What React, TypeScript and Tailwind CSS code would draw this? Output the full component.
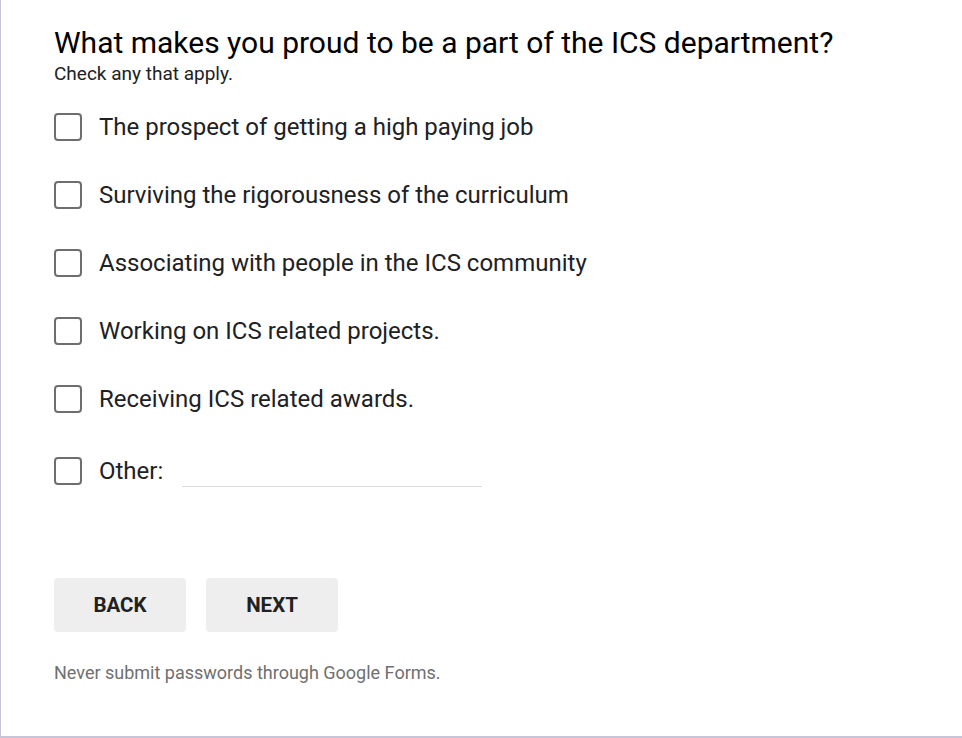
const options = [
    "The prospect of getting a high paying job",
    "Surviving the rigorousness of the curriculum",
    "Associating with people in the ICS community",
    "Working on ICS related projects.",
    "Receiving ICS related awards.",
]

const Checkbox = () => (
    <div className="w-[28px] h-[28px] shrink-0 rounded-[4px] border-2 border-[#6e6e6e] bg-white" />
)

const App = () => {
    return (
        <div className="w-[962px] h-[738px] bg-white font-['Roboto',sans-serif] text-[#202124] overflow-hidden">
            <div className="h-[738px] border-l border-b-2 border-[#c9c5d9] pl-[53px] pt-[26px]">
                <h2 className="text-[30px] leading-[34px] text-black">What makes you proud to be a part of the ICS department?</h2>
                <p className="text-[19px] leading-[22px] text-[#202124] mt-[3px]">Check any that apply.</p>

                <div className="flex flex-col mt-[8px]">
                    {options.map(option => (
                        <label key={option} className="flex items-center gap-[17px] h-[68px]">
                            <Checkbox />
                            <span className="text-[24px] leading-[28px] text-[#202124]">{option}</span>
                        </label>
                    ))}
                    <label className="flex items-center gap-[17px] h-[68px] mt-[4px]">
                        <Checkbox />
                        <span className="text-[24px] leading-[28px] text-[#202124]">Other:</span>
                        <div className="ml-[2px] w-[300px] h-[32px] border-b border-[#dcdcdc]" />
                    </label>
                </div>

                <div className="flex gap-[20px] mt-[73px]">
                    <button className="w-[132px] h-[54px] rounded-[4px] bg-[#eeeeee] text-[20.5px] font-bold text-[#212121]">BACK</button>
                    <button className="w-[132px] h-[54px] rounded-[4px] bg-[#eeeeee] text-[20.5px] font-bold text-[#212121]">NEXT</button>
                </div>

                <p className="mt-[30px] text-[18px] leading-[22px] text-[#6f6f6f]">Never submit passwords through Google Forms.</p>
            </div>
        </div>
    )
}

export default App;
